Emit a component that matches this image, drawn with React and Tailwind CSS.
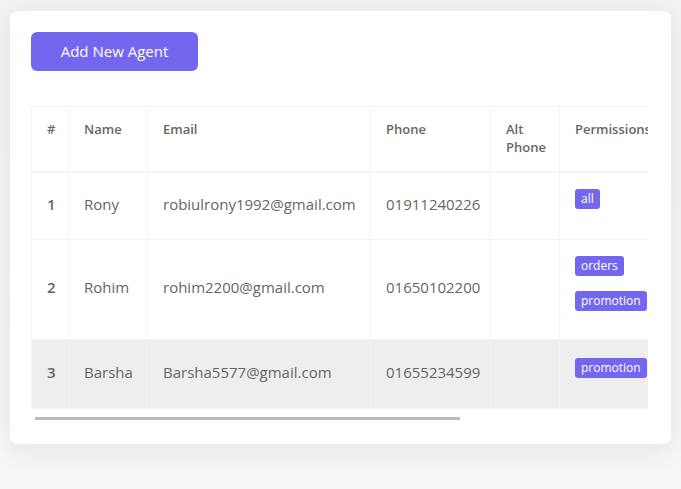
import React from 'react';

const agents = [
  { id: 1, name: 'Rony', email: 'robiulrony1992@gmail.com', phone: '01911240226', alt: '', perms: ['all'], h: 'h-[68px]' },
  { id: 2, name: 'Rohim', email: 'rohim2200@gmail.com', phone: '01650102200', alt: '', perms: ['orders', 'promotion'], h: 'h-[100px]' },
  { id: 3, name: 'Barsha', email: 'Barsha5577@gmail.com', phone: '01655234599', alt: '', perms: ['promotion'], h: 'h-[69px]', shaded: true },
];

const th = 'border border-[#f4f4f4] border-b-2 align-top text-left pl-[15px] pr-2 pt-[13px] text-[13px] font-semibold leading-[18px] text-[#666]';
const td = 'border border-[#f4f4f4] align-middle pl-[15px] pr-2 text-[15px] text-[#666]';

export default function App() {
  return (
    <div className="min-h-screen bg-gradient-to-b from-[#f2f2f2] to-[#f6f6f6] pt-[11px] px-[10px]" style={{ fontFamily: '"Open Sans", "Liberation Sans", sans-serif' }}>
      <div className="bg-white rounded-lg shadow-[0_6px_28px_rgba(0,0,0,0.07)] h-[433px] px-[21px] pt-[21px]">
        <button
          type="button"
          className="w-[167px] h-[39px] rounded-md bg-[#7367f0] text-white text-[15px]"
        >
          Add New Agent
        </button>

        {/* Agent table */}
        <div className="mt-[35px] w-[617px] overflow-hidden">
          <table className="table-fixed border-collapse w-[890px]">
            <colgroup>
              <col className="w-[37px]" />
              <col className="w-[79px]" />
              <col className="w-[223px]" />
              <col className="w-[120px]" />
              <col className="w-[69px]" />
              <col className="w-[110px]" />
              <col />
            </colgroup>
            <thead>
              <tr className="h-[65px]">
                <th className={th}>#</th>
                <th className={th}>Name</th>
                <th className={th}>Email</th>
                <th className={th}>Phone</th>
                <th className={th}>Alt Phone</th>
                <th className={`${th} whitespace-nowrap`}>Permissions</th>
                <th className={th}>Action</th>
              </tr>
            </thead>
            <tbody>
              {agents.map((a) => (
                <tr key={a.id} className={`${a.h} ${a.shaded ? 'bg-[#eeeeee]' : ''}`}>
                  <td className={`${td} pb-[4px] text-[11px] font-semibold text-[#555]`}>{a.id}</td>
                  <td className={`${td} pb-[4px]`}>{a.name}</td>
                  <td className={`${td} pb-[4px]`}>{a.email}</td>
                  <td className={`${td} pb-[4px]`}>{a.phone}</td>
                  <td className={td}>{a.alt}</td>
                  <td className={td}>
                    <div className="flex flex-col items-start gap-[15px] pb-[13px]">
                      {a.perms.map((p) => (
                        <span key={p} className="h-[20px] px-[6px] rounded-[3px] bg-[#7367f0] text-white text-[12px] leading-[20px]">
                          {p}
                        </span>
                      ))}
                    </div>
                  </td>
                  <td className={td}></td>
                </tr>
              ))}
            </tbody>
          </table>
        </div>

        <div className="mt-[8px] ml-[4px] h-[3px] w-[425px] bg-[#bbbbbb]" />
      </div>
    </div>
  );
}
